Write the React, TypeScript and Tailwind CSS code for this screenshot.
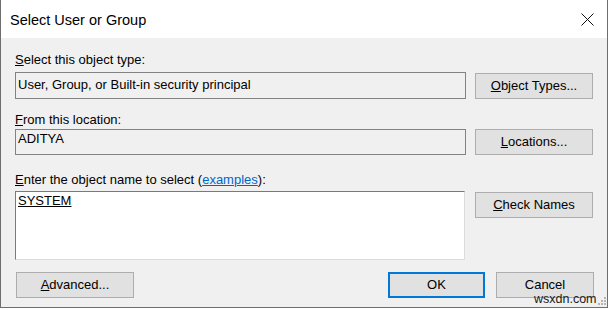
import React from 'react';

const font = { fontFamily: '"Liberation Sans", Arial, sans-serif' };

function Btn({
  children,
  primary = false,
  className = '',
}: {
  children: React.ReactNode;
  primary?: boolean;
  className?: string;
}) {
  return (
    <button
      className={`flex h-[26px] shrink-0 items-center justify-center bg-[#e1e1e1] text-[13px] leading-[16px] text-black ${
        primary ? 'border-2 border-[#0078d7]' : 'border border-[#adadad]'
      } ${className}`}
    >
      {children}
    </button>
  );
}

export default function App() {
  return (
    <div className="relative h-[310px] w-[609px] bg-white" style={font}>
      <div className="flex h-[308px] w-[608px] flex-col border-x border-b border-[#6e6e6e]">
        {/* title bar */}
        <div className="flex h-[38px] shrink-0 items-start bg-white">
          <span className="ml-[9px] mt-[12px] text-[14.5px] leading-[17px] text-black">Select User or Group</span>
          <svg className="ml-auto mr-[13px] mt-[13px]" width="13" height="13" viewBox="0 0 13 13">
            <path d="M0.5 0.5 L12.5 12.5 M12.5 0.5 L0.5 12.5" stroke="#111" strokeWidth="1" fill="none" />
          </svg>
        </div>

        {/* body */}
        <div className="flex flex-1 flex-col bg-[#f0f0f0] pl-[14px] pt-[14px] text-[13px] leading-[16px] text-black">
          <div>
            <span className="underline">S</span>elect this object type:
          </div>
          <div className="mt-[4px] flex items-start">
            <div className="h-[27px] w-[451px] border border-[#838383] bg-[#f0f0f0] pl-[2px] pt-[4px]">
              User, Group, or Built-in security principal
            </div>
            <Btn className="ml-[9px] mt-[1px] w-[118px]">
              <span className="underline">O</span>bject Types...
            </Btn>
          </div>

          <div className="mt-[13px]">
            <span className="underline">F</span>rom this location:
          </div>
          <div className="mt-[1px] flex items-start">
            <div className="h-[26px] w-[451px] border border-[#838383] bg-[#f0f0f0] pl-[2px] pt-[1px]">ADITYA</div>
            <Btn className="ml-[9px] w-[118px]">
              <span className="underline">L</span>ocations...
            </Btn>
          </div>

          <div className="mt-[17px]">
            <span className="underline">E</span>nter the object name to select (
            <span className="text-[#0066cc] underline">examples</span>):
          </div>
          <div className="mt-[3px] flex items-start">
            <div className="h-[69px] w-[450px] border border-[#7a7a7a] border-b-[#dcdcdc] border-r-[#dcdcdc] bg-white pl-[2px] pt-[1px]">
              <span className="underline">SYSTEM</span>
            </div>
            <Btn className="ml-[10px] mt-[1px] w-[118px]">
              <span className="underline">C</span>heck Names
            </Btn>
          </div>

          <div className="mt-[12px] flex items-start">
            <Btn className="ml-[1px] w-[118px]">
              <span className="underline">A</span>dvanced...
            </Btn>
            <Btn primary className="ml-auto w-[97px]">
              OK
            </Btn>
            <Btn className="ml-[11px] mr-[13px] w-[98px]">Cancel</Btn>
          </div>
        </div>
      </div>

      {/* watermark + grip overlay */}
      <span className="absolute left-[534px] top-[292px] text-[12.5px] leading-[15px] text-[#1a1a1a]">wsxdn.com</span>
      <svg className="absolute left-[598px] top-[297px]" width="9" height="9" viewBox="0 0 9 9">
        <rect x="6" y="0" width="2" height="2" fill="#b5b5b5" />
        <rect x="3" y="3" width="2" height="2" fill="#b5b5b5" />
        <rect x="6" y="3" width="2" height="2" fill="#b5b5b5" />
        <rect x="0" y="6" width="2" height="2" fill="#b5b5b5" />
        <rect x="3" y="6" width="2" height="2" fill="#b5b5b5" />
        <rect x="6" y="6" width="2" height="2" fill="#b5b5b5" />
      </svg>
    </div>
  );
}
